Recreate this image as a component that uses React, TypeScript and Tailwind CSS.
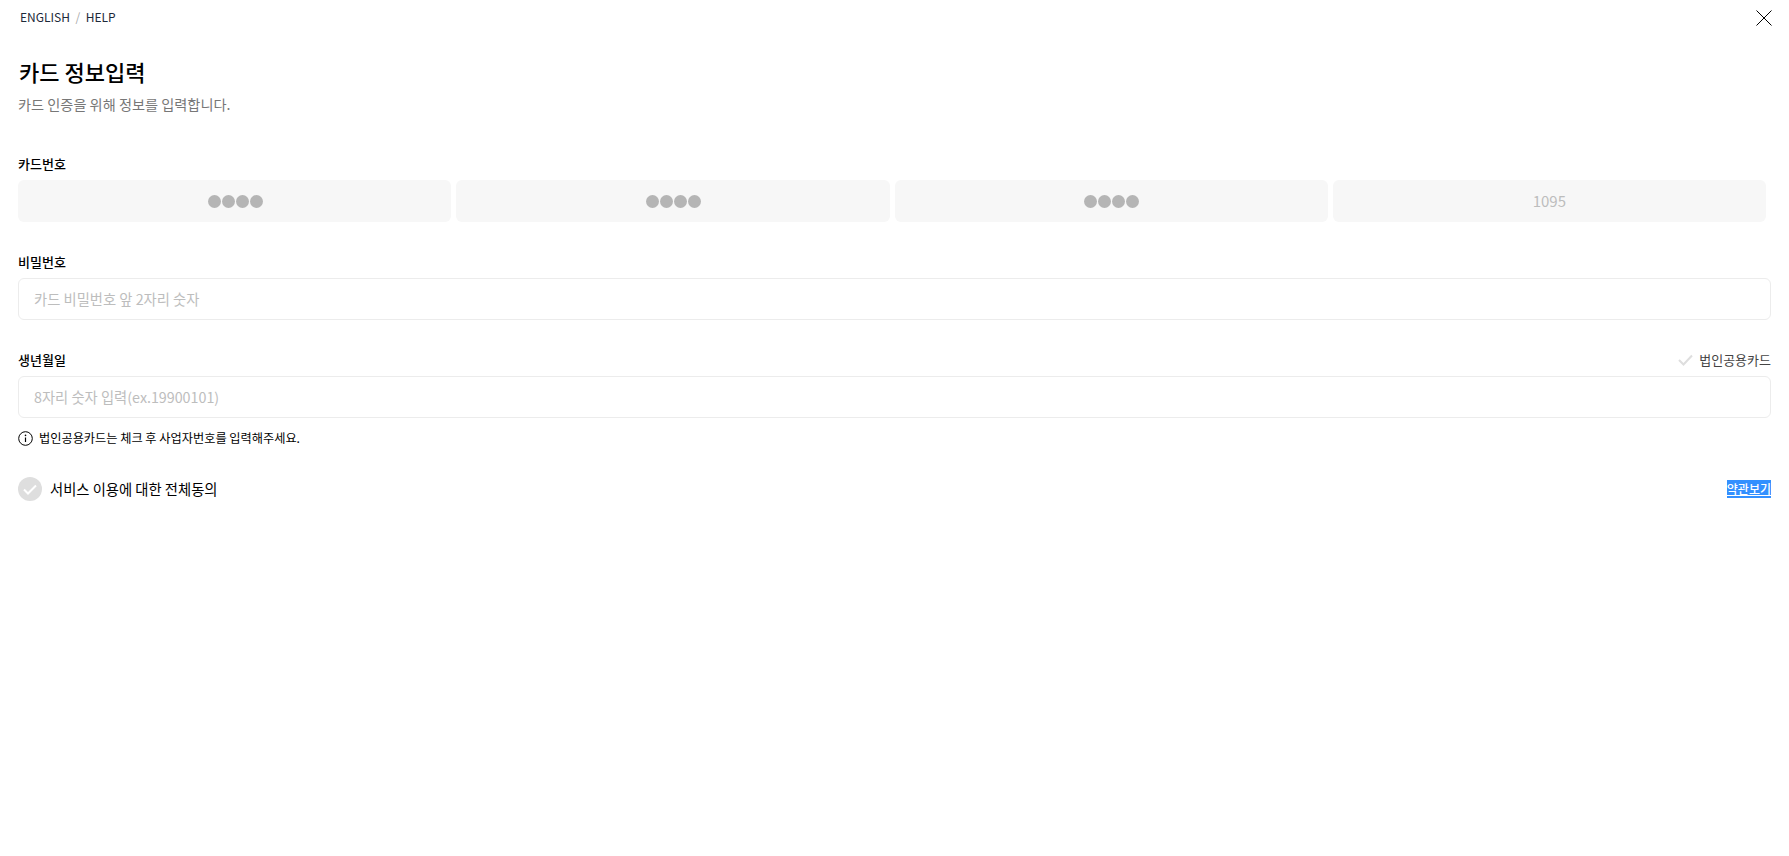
const font = { fontFamily: '"Noto Sans CJK KR", "Noto Sans", sans-serif' };

function Dots() {
  return (
    <div className="flex gap-px pl-[1px]">
      <span className="w-[13px] h-[13px] rounded-full bg-[#b5b5b5]" />
      <span className="w-[13px] h-[13px] rounded-full bg-[#b5b5b5]" />
      <span className="w-[13px] h-[13px] rounded-full bg-[#b5b5b5]" />
      <span className="w-[13px] h-[13px] rounded-full bg-[#b5b5b5]" />
    </div>
  );
}

function CardCell({ children }: { children: React.ReactNode }) {
  return (
    <div className="flex-1 h-[42px] flex items-center justify-center bg-[#f7f7f7] rounded-md text-[15px] text-[#bdbdbd]">
      {children}
    </div>
  );
}

function TextBox({ placeholder }: { placeholder: string }) {
  return (
    <div className="h-[42px] flex items-center px-[15px] bg-white border border-[#ececec] rounded-md text-[14.3px] text-[#bdbdbd]">
      {placeholder}
    </div>
  );
}

export default function App() {
  return (
    <div className="min-h-screen bg-white px-[18px] relative text-black" style={font}>
      {/* Top links */}
      <div className="h-[34px] flex items-center pl-[2px] text-[12px] text-[#1d2a3a]">
        <span>ENGLISH</span>
        <span className="mx-[5.5px] text-[#aaaaaa]">/</span>
        <span>HELP</span>
      </div>
      <button className="absolute top-[10px] right-[17px]">
        <svg width="16" height="16" viewBox="0 0 16 16" fill="none" className="block">
          <path d="M0.5 0.5l15 15M15.5 0.5l-15 15" stroke="#000" strokeWidth="1" />
        </svg>
      </button>

      {/* Header */}
      <h1 className="mt-[19px] pl-px text-[22px] leading-[36px] font-medium">카드 정보입력</h1>
      <p className="mt-[5px] text-[14.2px] leading-[20px] text-[#777777]">카드 인증을 위해 정보를 입력합니다.</p>

      {/* Card number */}
      <div className="mt-[40px] text-[13px] leading-[20px] font-medium">카드번호</div>
      <div className="mt-[6px] flex gap-[5px] pr-[5px]">
        <CardCell><Dots /></CardCell>
        <CardCell><Dots /></CardCell>
        <CardCell><Dots /></CardCell>
        <CardCell>1095</CardCell>
      </div>

      {/* Password */}
      <div className="mt-[30px] text-[13px] leading-[20px] font-medium">비밀번호</div>
      <div className="mt-[6px]">
        <TextBox placeholder="카드 비밀번호 앞 2자리 숫자" />
      </div>

      {/* Birth date */}
      <div className="mt-[30px] flex items-center justify-between leading-[20px]">
        <span className="text-[13px] font-medium">생년월일</span>
        <span className="flex items-center gap-[6px] text-[13px] text-[#444444]">
          <svg width="15" height="12" viewBox="0 0 15 12" fill="none">
            <path d="M1 6l4.5 4.5L14 1.5" stroke="#dedede" strokeWidth="2" />
          </svg>
          법인공용카드
        </span>
      </div>
      <div className="mt-[6px]">
        <TextBox placeholder="8자리 숫자 입력(ex.19900101)" />
      </div>

      {/* Info */}
      <div className="mt-[10px] flex items-center gap-[6px] text-[12.2px] leading-[20px]">
        <svg width="15" height="15" viewBox="0 0 15 15" fill="none">
          <circle cx="7.5" cy="7.5" r="6.8" stroke="#000" strokeWidth="1" />
          <path d="M7.5 6.5v4.5" stroke="#000" strokeWidth="1.2" />
          <circle cx="7.5" cy="4.4" r="0.8" fill="#000" />
        </svg>
        법인공용카드는 체크 후 사업자번호를 입력해주세요.
      </div>

      {/* Agreement */}
      <div className="mt-[29px] flex items-center justify-between">
        <div className="flex items-center gap-[8px] text-[14.3px]">
          <span className="w-[24px] h-[24px] rounded-full bg-[#dedede] flex items-center justify-center">
            <svg width="14" height="11" viewBox="0 0 14 11" fill="none">
              <path d="M1 5.5l4 4L13 1.5" stroke="#fff" strokeWidth="2" />
            </svg>
          </span>
          서비스 이용에 대한 전체동의
        </div>
        <a className="text-[12px] leading-[18px] font-medium underline text-white bg-[#3390ff]">약관보기</a>
      </div>
    </div>
  );
}
